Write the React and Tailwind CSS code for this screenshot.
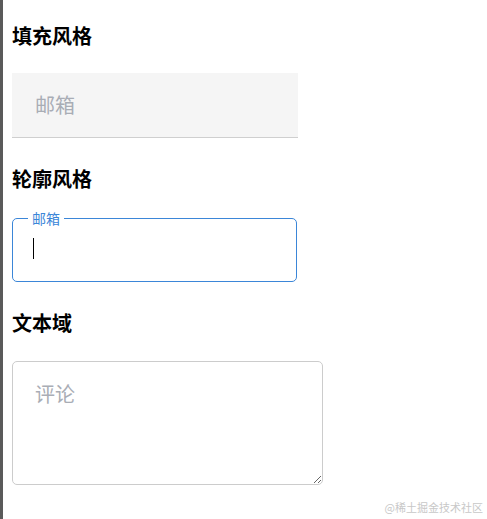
export default function App() {
  return (
    <div className="relative min-h-[519px] border-l-[3px] border-[#5a5a5a] bg-white pl-[9px] pt-[22px] font-['Noto_Sans_CJK_SC',sans-serif] text-black">
      <h2 className="text-[20px] font-bold leading-7">填充风格</h2>
      <div className="mt-[23px] flex h-[65px] w-[286px] items-center border-b border-[#cfcfcf] bg-[#f5f5f5] pl-[23px]">
        <input
          placeholder="邮箱"
          className="w-full bg-transparent text-[20px] text-black outline-none placeholder:text-[#a9adb5]"
        />
      </div>

      <h2 className="mt-[27px] text-[20px] font-bold leading-7">轮廓风格</h2>
      <fieldset className="mt-[16px] h-[73px] w-[285px] rounded-[5px] border border-[#3b86d8] px-[15px]">
        <legend className="px-1 text-[14px] leading-[18px] text-[#3b86d8]">邮箱</legend>
        <div className="mt-[6px] flex items-center pl-[5px]">
          <span className="h-[21px] w-px bg-black" />
          <input className="w-full bg-transparent text-[20px] caret-transparent outline-none" />
        </div>
      </fieldset>

      <h2 className="mt-[27px] text-[20px] font-bold leading-7">文本域</h2>
      <textarea
        placeholder="评论"
        className="mt-[24px] block h-[124px] w-[311px] rounded-[5px] border border-[#cccccc] px-[22px] pt-[18px] text-[20px] leading-7 outline-none placeholder:text-[#a9adb5]"
      />

      <div className="absolute bottom-[5px] right-[4px] text-[11px] leading-[14px] text-[#c8c8c8]">@稀土掘金技术社区</div>
    </div>
  );
}
